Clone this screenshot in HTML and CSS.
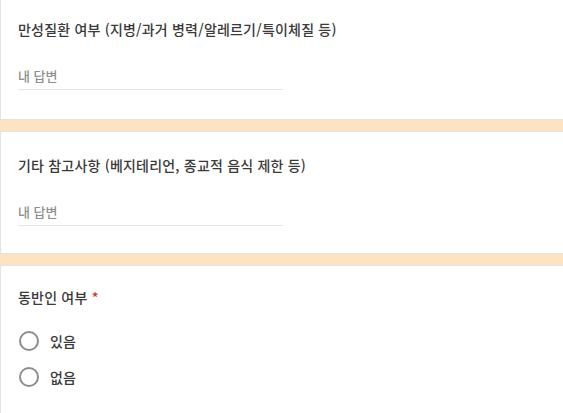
FILE: index.html
```html
<!DOCTYPE html>
<html lang="ko">
<head>
<meta charset="utf-8">
<link rel="stylesheet" href="styles.css">
</head>
<body>
<main class="form">
  <section class="card card-first">
    <div class="question">만성질환 여부 (지병/과거 병력/알레르기/특이체질 등)</div>
    <div class="answer"><span class="placeholder">내 답변</span></div>
  </section>
  <section class="card card-mid">
    <div class="question">기타 참고사항 (베지테리언, 종교적 음식 제한 등)</div>
    <div class="answer"><span class="placeholder">내 답변</span></div>
  </section>
  <section class="card card-last">
    <div class="question">동반인 여부 <span class="req">*</span></div>
    <div class="options">
      <label class="option"><span class="radio"></span><span class="opt-text">있음</span></label>
      <label class="option"><span class="radio"></span><span class="opt-text">없음</span></label>
    </div>
  </section>
</main>
</body>
</html>
```

FILE: styles.css
```css
html, body {
  margin: 0;
  padding: 0;
  overflow: hidden;
}
body {
  background: #fde3c1;
  font-family: "Noto Sans CJK KR", "Noto Sans", sans-serif;
  width: 563px;
  height: 413px;
}
.form {
  display: flex;
  flex-direction: column;
  gap: 11px;
  width: 100%;
}
.card {
  background: #fff;
  border: 1px solid #e3e3e3;
  border-right: none;
  padding: 0 0 0 17px;
  box-sizing: border-box;
}
.card-first {
  border-top: none;
  height: 120px;
  padding-top: 17px;
}
.card-mid {
  height: 123px;
  padding-top: 21px;
}
.card-last {
  height: 160px;
  padding-top: 19px;
  border-bottom: none;
}
.question {
  font-size: 14px;
  font-weight: 500;
  line-height: 24px;
  color: #3a3a3a;
  letter-spacing: 0.2px;
}
.req {
  color: #d93025;
}
.answer {
  margin-top: 25px;
  width: 265px;
  border-bottom: 1px solid #e6e6e6;
  height: 24px;
  box-sizing: border-box;
}
.placeholder {
  font-size: 13px;
  font-weight: 500;
  line-height: 20px;
  color: #8f8f8f;
  display: block;
}
.options {
  margin-top: 22px;
  display: flex;
  flex-direction: column;
  gap: 16px;
}
.option {
  display: flex;
  align-items: center;
  gap: 11px;
  height: 20px;
}
.radio {
  width: 16px;
  height: 16px;
  border: 2px solid #8d8d8d;
  border-radius: 50%;
  margin-left: 1px;
}
.opt-text {
  font-size: 14px;
  font-weight: 500;
  color: #3a3a3a;
}
```
